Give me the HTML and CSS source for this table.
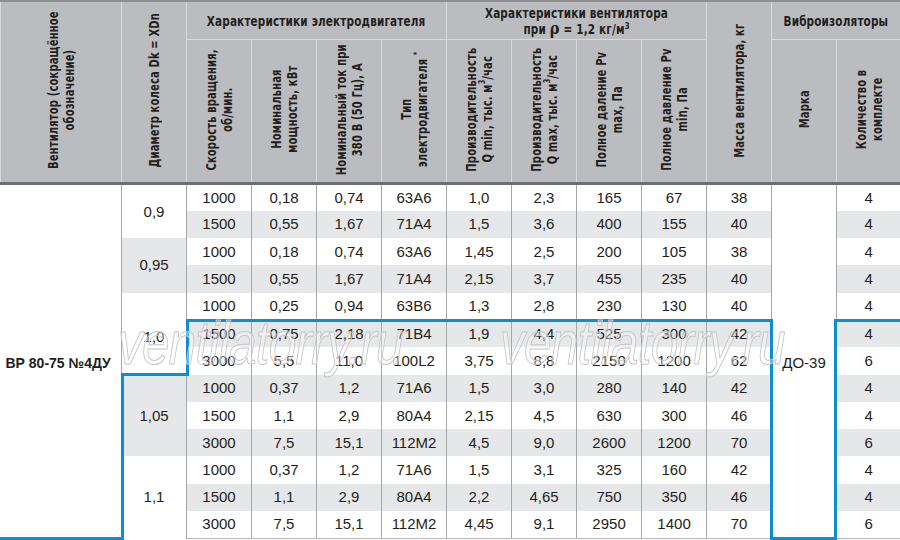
FILE: index.html
```html
<!DOCTYPE html>
<html lang="ru">
<head>
<meta charset="utf-8">
<title>ВР 80-75 №4ДУ</title>
<link rel="stylesheet" href="styles.css">
</head>
<body>
<div class="sheet">
<table class="spec">
  <colgroup>
    <col class="c-name"><col class="c-n"><col class="c-n"><col class="c-n"><col class="c-n"><col class="c-n"><col class="c-n"><col class="c-n"><col class="c-n"><col class="c-n"><col class="c-n"><col class="c-n"><col class="c-last">
  </colgroup>
  <thead>
    <tr class="groups">
      <th rowspan="2"><div class="vt">Вентилятор (сокращённое<br>обозначение)</div></th>
      <th rowspan="2"><div class="vt">Диаметр колеса Dk = XDn</div></th>
      <th colspan="4" class="gh"><span class="ght">Характеристики электродвигателя</span></th>
      <th colspan="4" class="gh"><span class="ght">Характеристики вентилятора<br>при <span class="rho">ρ</span> = 1,2 кг/м<sup>3</sup></span></th>
      <th rowspan="2"><div class="vt">Масса вентилятора, кг</div></th>
      <th colspan="2" class="gh"><span class="ght">Виброизоляторы</span></th>
    </tr>
    <tr class="subs">
      <th><div class="vt">Скорость вращения,<br>об/мин.</div></th>
      <th><div class="vt">Номинальная<br>мощность, кВт</div></th>
      <th><div class="vt">Номинальный ток при<br>380 В (50 Гц), А</div></th>
      <th><div class="vt">Тип<br>электродвигателя <sup>*</sup></div></th>
      <th><div class="vt">Производительность<br>Q min, тыс. м<sup>3</sup>/час</div></th>
      <th><div class="vt">Производительность<br>Q max, тыс. м<sup>3</sup>/час</div></th>
      <th><div class="vt">Полное даление Pv<br>max, Па</div></th>
      <th><div class="vt">Полное давление Pv<br>min, Па</div></th>
      <th><div class="vt">Марка</div></th>
      <th><div class="vt">Количество в<br>комплекте</div></th>
    </tr>
  </thead>
  <tbody>
    <tr>
      <td rowspan="13" class="model">ВР 80-75 №4ДУ</td>
      <td rowspan="2" class="dia">0,9</td>
      <td>1000</td><td>0,18</td><td>0,74</td><td>63А6</td><td>1,0</td><td>2,3</td><td>165</td><td>67</td><td>38</td>
      <td rowspan="13" class="mark">ДО-39</td>
      <td>4</td>
    </tr>
    <tr class="alt"><td>1500</td><td>0,55</td><td>1,67</td><td>71А4</td><td>1,5</td><td>3,6</td><td>400</td><td>155</td><td>40</td><td>4</td></tr>
    <tr>
      <td rowspan="2" class="dia alt-cell">0,95</td>
      <td>1000</td><td>0,18</td><td>0,74</td><td>63А6</td><td>1,45</td><td>2,5</td><td>200</td><td>105</td><td>38</td><td>4</td>
    </tr>
    <tr class="alt"><td>1500</td><td>0,55</td><td>1,67</td><td>71А4</td><td>2,15</td><td>3,7</td><td>455</td><td>235</td><td>40</td><td>4</td></tr>
    <tr>
      <td rowspan="3" class="dia dia-low">1,0</td>
      <td>1000</td><td>0,25</td><td>0,94</td><td>63В6</td><td>1,3</td><td>2,8</td><td>230</td><td>130</td><td>40</td><td>4</td>
    </tr>
    <tr class="alt"><td>1500</td><td>0,75</td><td>2,18</td><td>71В4</td><td>1,9</td><td>4,4</td><td>525</td><td>300</td><td>42</td><td>4</td></tr>
    <tr><td>3000</td><td>5,5</td><td>11,0</td><td>100L2</td><td>3,75</td><td>8,8</td><td>2150</td><td>1200</td><td>62</td><td>6</td></tr>
    <tr class="alt">
      <td rowspan="3" class="dia alt-cell">1,05</td>
      <td>1000</td><td>0,37</td><td>1,2</td><td>71А6</td><td>1,5</td><td>3,0</td><td>280</td><td>140</td><td>42</td><td>4</td>
    </tr>
    <tr><td>1500</td><td>1,1</td><td>2,9</td><td>80А4</td><td>2,15</td><td>4,5</td><td>630</td><td>300</td><td>46</td><td>4</td></tr>
    <tr class="alt"><td>3000</td><td>7,5</td><td>15,1</td><td>112М2</td><td>4,5</td><td>9,0</td><td>2600</td><td>1200</td><td>70</td><td>6</td></tr>
    <tr>
      <td rowspan="3" class="dia">1,1</td>
      <td>1000</td><td>0,37</td><td>1,2</td><td>71А6</td><td>1,5</td><td>3,1</td><td>325</td><td>160</td><td>42</td><td>4</td>
    </tr>
    <tr class="alt"><td>1500</td><td>1,1</td><td>2,9</td><td>80А4</td><td>2,2</td><td>4,65</td><td>750</td><td>350</td><td>46</td><td>4</td></tr>
    <tr><td>3000</td><td>7,5</td><td>15,1</td><td>112М2</td><td>4,45</td><td>9,1</td><td>2950</td><td>1400</td><td>70</td><td>6</td></tr>
  </tbody>
</table>

<svg class="outline" width="900" height="540" viewBox="0 0 900 540" aria-hidden="true">
  <polyline points="0,538.5 122.5,538.5 122.5,374.5 187.5,374.5 187.5,320.5 771.5,320.5 771.5,538.5 835.5,538.5 835.5,320.5 900,320.5" fill="none" stroke="#0b8ed8" stroke-width="3" stroke-linejoin="miter"/>
</svg>

<div class="watermark wm-1">ventilatorry.ru</div>
<div class="watermark wm-2">ventilatorry.ru</div>
</div>
</body>
</html>
```

FILE: styles.css
```css
html, body {
  margin: 0;
  padding: 0;
  background: #ffffff;
}

.sheet {
  position: relative;
  width: 900px;
  height: 540px;
  overflow: hidden;
  background: #ffffff;
}

.spec {
  border-collapse: collapse;
  table-layout: fixed;
  width: 900px;
  font-family: "Liberation Sans", Arial, sans-serif;
  color: #231f20;
}

.c-name { width: 121px; }
.c-n { width: 65px; }
.c-last { width: 64px; }

/* ---------- header ---------- */
.spec thead th {
  background: #bbbcbf;
  border: 1px solid #d9dadc;
  padding: 0;
  font-family: "DejaVu Sans Condensed", "Liberation Sans", sans-serif;
  font-weight: bold;
  font-size: 13.5px;
  letter-spacing: 0.2px;
  line-height: 16px;
  color: #231f20;
  text-align: center;
  vertical-align: middle;
  overflow: hidden;
}

.spec thead tr.groups th {
  border-top: 2px solid #8e8f92;
  height: 37px;
}

.spec thead tr.subs th {
  height: 142px;
}

.spec thead tr.subs th,
.spec thead th[rowspan="2"] {
  border-bottom: 3px solid #6d6e71;
}

.ght {
  display: inline-block;
  transform: scaleX(0.86);
  white-space: nowrap;
}

.rho {
  font-family: "DejaVu Serif", serif;
  font-size: 17px;
  line-height: 10px;
}

.spec sup {
  font-size: 9px;
  line-height: 0;
  vertical-align: 5px;
  letter-spacing: 0;
}

.vt {
  display: inline-block;
  writing-mode: vertical-rl;
  transform: rotate(180deg) scaleY(0.82);
  text-align: center;
  white-space: nowrap;
  margin: -14px 0;
}

/* ---------- body ---------- */
.spec tbody tr {
  height: 27.3px;
}

.spec tbody td {
  padding: 0;
  border-left: 1px solid #a4a6a9;
  border-right: 1px solid #a4a6a9;
  font-size: 15px;
  line-height: 18px;
  text-align: center;
  vertical-align: middle;
  background: #ffffff;
}

.spec tbody tr.alt td {
  background: #e6e7e8;
}

.spec tbody tr.alt td.dia,
.spec tbody td.dia {
  background: #ffffff;
}

.spec tbody td.dia.alt-cell,
.spec tbody tr.alt td.dia.alt-cell {
  background: #e6e7e8;
}

.spec tbody td.dia-low {
  padding-top: 6px;
}

.spec tbody td.model {
  text-align: left;
  padding-left: 5px;
  padding-top: 3px;
  font-weight: bold;
  font-size: 14px;
  background: #ffffff;
  border-left: none;
}

.spec tbody td.mark {
  background: #ffffff;
  padding-top: 3px;
}

.spec tbody tr:last-child td,
.spec tbody td[rowspan="13"] {
  border-bottom: 1px solid #b5b7ba;
}

/* ---------- overlays ---------- */
.outline {
  position: absolute;
  left: 0;
  top: 0;
  pointer-events: none;
}

.watermark {
  position: absolute;
  font-family: "Liberation Sans", Arial, sans-serif;
  font-style: italic;
  font-size: 62px;
  line-height: 1;
  color: rgba(255, 255, 255, 0.35);
  -webkit-text-stroke: 1px #c4c5c7;
  letter-spacing: -1px;
  transform-origin: left top;
  transform: scaleX(0.8);
  pointer-events: none;
  white-space: nowrap;
}

.wm-1 { left: 118px; top: 312px; }
.wm-2 { left: 500px; top: 312px; }
```
